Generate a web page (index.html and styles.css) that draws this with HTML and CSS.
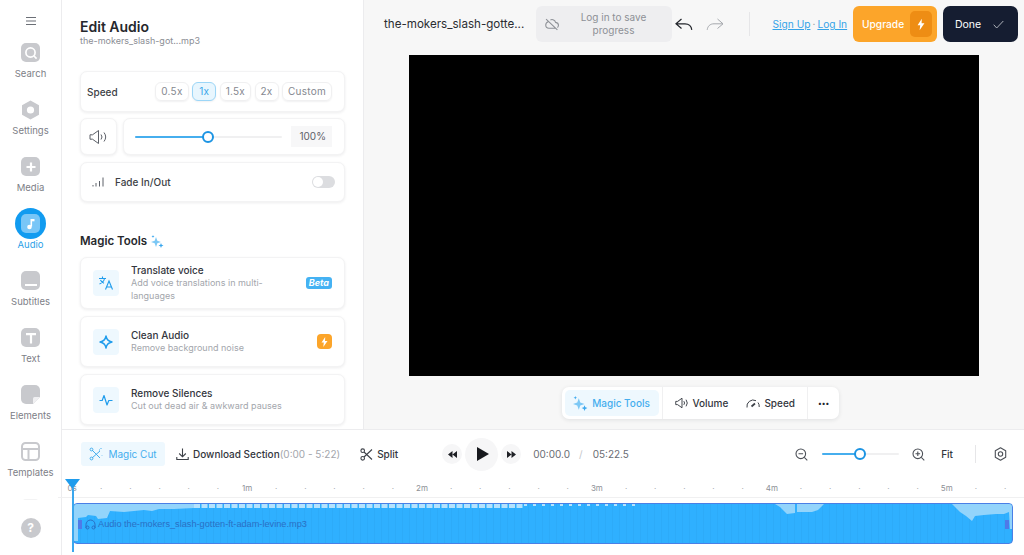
FILE: index.html
```html
<!DOCTYPE html>
<html lang="en">
<head>
<meta charset="utf-8">
<title>Edit Audio</title>
<link rel="stylesheet" href="styles.css">
</head>
<body>
<div class="app">
  <nav class="sidebar">
    <button class="menu" aria-label="Menu">
      <svg width="12" height="10" viewBox="0 0 12 10"><path d="M1 1.500h10M1 5h10M1 8.500h10" stroke="#6b6f76" stroke-width="1.100" fill="none"/></svg>
    </button>
    <div class="nav-list">
      <div class="nav-item"><span class="nav-icon"><svg width="18" height="18" viewBox="0 0 18 18"><circle cx="8.500" cy="8.500" r="4.600" fill="none" stroke="#fff" stroke-width="1.700"/><path d="M12 12l2.600 2.600" stroke="#fff" stroke-width="1.700"/></svg></span><span>Search</span></div>
      <div class="nav-item"><span class="nav-icon plain"><svg width="19" height="20" viewBox="0 0 19 20"><path d="M9.500 0.500l8.500 4.800v9.400l-8.500 4.800L1 14.700V5.300z" fill="#c8c9cd"/><circle cx="9.500" cy="10" r="3.600" fill="#fff"/></svg></span><span>Settings</span></div>
      <div class="nav-item"><span class="nav-icon"><svg width="14" height="14" viewBox="0 0 14 14"><path d="M7 2.500v9M2.500 7h9" stroke="#fff" stroke-width="2.200"/></svg></span><span>Media</span></div>
      <div class="nav-item active"><span class="nav-disc"><span class="nav-icon"><svg width="14" height="14" viewBox="0 0 14 14"><path d="M7.300 2v7.500" stroke="#fff" stroke-width="1.600"/><path d="M7.300 2h3.200v2.300H7.300" fill="#fff"/><circle cx="5.500" cy="10" r="2.300" fill="#fff"/></svg></span></span><span>Audio</span></div>
      <div class="nav-item"><span class="nav-icon"><svg width="12" height="4" viewBox="0 0 12 4" class="low"><path d="M0 2h12" stroke="#fff" stroke-width="2"/></svg></span><span>Subtitles</span></div>
      <div class="nav-item"><span class="nav-icon"><svg width="12" height="12" viewBox="0 0 12 12"><path d="M1 2.200h10M6 2.200V11.500" stroke="#fff" stroke-width="2.200"/></svg></span><span>Text</span></div>
      <div class="nav-item"><span class="nav-icon"><svg width="18" height="18" viewBox="0 0 18 18"><path d="M18 11l-7 7h7z" fill="#fff"/><path d="M11 18v-5.500a1.500 1.500 0 0 1 1.500-1.500H18" fill="#f0f0f2"/></svg></span><span>Elements</span></div>
      <div class="nav-item"><span class="nav-icon outline"><svg width="19" height="19" viewBox="0 0 19 19" fill="none" stroke="#c8c9cd" stroke-width="2"><rect x="1" y="1" width="17" height="17" rx="3.500"/><path d="M1 7h17M7.500 7v11"/></svg></span><span>Templates</span></div>
      <div class="nav-item"><span class="nav-icon"></span></div>
    </div>
    <div class="help"><span>?</span></div>
  </nav>

  <div class="workspace">
    <div class="upper">
      <aside class="panel">
        <h1>Edit Audio</h1>
        <p class="file">the-mokers_slash-got...mp3</p>

        <div class="card speed">
          <span class="speed-label">Speed</span>
          <div class="chips">
            <span class="chip">0.5x</span><span class="chip on">1x</span><span class="chip">1.5x</span><span class="chip">2x</span><span class="chip">Custom</span>
          </div>
        </div>

        <div class="volume">
          <div class="card vol-icon">
            <svg width="19" height="16" viewBox="0 0 19 16" fill="none" stroke="#5c6068" stroke-width="1"><path d="M1 5.800v4.400h2.500L9.500 14.500V1.500L3.500 5.800z" stroke-linejoin="round"/><path d="M12 5.500a4 4 0 0 1 0 5M15 3.500a7.500 7.500 0 0 1 0 9"/></svg>
          </div>
          <div class="card vol-slider">
            <div class="slider vol"><span class="fill"></span><span class="knob"></span></div>
            <span class="pct">100%</span>
          </div>
        </div>

        <div class="card fade">
          <svg width="12" height="10" viewBox="0 0 12 10" stroke="#5c6068" fill="none"><path d="M1 8v1.500M4 6v3.500M7.500 4v5.500M11 .5v9"/></svg>
          <span class="fade-label">Fade In/Out</span>
          <span class="toggle"><span></span></span>
        </div>

        <h2>Magic Tools
          <svg width="13" height="13" viewBox="0 0 13 13"><path d="M5 2l1.300 3.700L10 7 6.300 8.300 5 12 3.700 8.300 0 7l3.700-1.300z" fill="#7cc8f5"/><path d="M10 8l.7 1.800 1.800.7-1.800.7L10 13l-.7-1.800-1.800-.7 1.800-.7z" fill="#3aa7ee"/><path d="M2 0l.4 1.100 1.100.4-1.100.4L2 3l-.4-1.100L.5 1.500l1.100-.4z" fill="#3aa7ee"/></svg>
        </h2>

        <div class="card tool tall">
          <span class="tool-icon"><svg width="16" height="16" viewBox="0 0 16 16" fill="none" stroke="#1f9cec" stroke-width="1.100"><path d="M1 3.500h7M4.500 1.500v2M6.500 3.500C6 6 4 8 1.500 9M2.500 5c.6 1.500 2 2.600 3.500 3.200"/><path d="M7.500 14.500l3.500-8.500 3.500 8.500M8.700 12h4.600"/></svg></span>
          <div class="tool-text"><b>Translate voice</b><small>Add voice translations in multi-languages</small></div>
          <span class="beta">Beta</span>
        </div>
        <div class="card tool">
          <span class="tool-icon"><svg width="14" height="14" viewBox="0 0 14 14" fill="none" stroke="#1f9cec" stroke-width="1.400"><path d="M7 1c.6 3.300 2.400 5.400 6 6-3.600.6-5.400 2.700-6 6-.6-3.300-2.400-5.400-6-6 3.600-.6 5.400-2.700 6-6z" stroke-linejoin="round"/></svg></span>
          <div class="tool-text"><b>Clean Audio</b><small>Remove background noise</small></div>
          <span class="bolt"><svg width="7" height="10" viewBox="0 0 7 10"><path d="M4.200 0L.5 5.600h2.300L2.300 10 6.500 4H4z" fill="#fff"/></svg></span>
        </div>
        <div class="card tool">
          <span class="tool-icon"><svg width="14" height="12" viewBox="0 0 14 12" fill="none" stroke="#1f9cec" stroke-width="1.200"><path d="M.5 6.500h2.700L5 1.500l3 9.500 1.800-4.500h3.700" stroke-linejoin="round"/></svg></span>
          <div class="tool-text"><b>Remove Silences</b><small>Cut out dead air &amp; awkward pauses</small></div>
        </div>
      </aside>

      <main class="stage">
        <header class="topbar">
          <span class="project">the-mokers_slash-gotte...</span>
          <div class="save">
            <svg width="14" height="13" viewBox="0 0 13 12" fill="none" stroke="#8d9096"><path d="M1 1l10.500 10M3 3.500C1.500 4 .7 5.200.7 6.500c0 1.800 1.400 3 3 3h6M5 1.800C7 .8 9.300 2 9.800 4c1.500.2 2.700 1.300 2.700 2.800 0 .8-.4 1.500-.9 2"/></svg>
            <span>Log in to save progress</span>
          </div>
          <button class="hist" aria-label="Undo"><svg width="18" height="13" viewBox="0 0 18 13" fill="none" stroke="#22252b" stroke-width="1.200"><path d="M6.500 1L1 5.800l5.500 4.700M1 5.800h9c4 0 6.300 2.400 6.800 6"/></svg></button>
          <button class="hist" aria-label="Redo"><svg width="18" height="13" viewBox="0 0 18 13" fill="none" stroke="#a5a8ad" stroke-width="1"><path d="M11.500 1L17 5.800l-5.500 4.700M17 5.800H8C4 5.800 1.700 8.200 1.200 11.800"/></svg></button>
          <span class="vline"></span>
          <div class="auth"><a>Sign Up</a><i>·</i><a>Log In</a></div>
          <button class="upgrade">Upgrade<span><svg width="8" height="13" viewBox="0 0 7 10"><path d="M4.200 0L.5 5.600h2.300L2.300 10 6.500 4H4z" fill="#fff"/></svg></span></button>
          <button class="done">Done<svg width="11" height="9" viewBox="0 0 11 9" fill="none" stroke="#aeb2ba"><path d="M.7 4.700l3 3.300L10.300 1"/></svg></button>
        </header>
        <div class="canvas"></div>
        <div class="floatbar">
          <span class="fb-magic">
            <svg width="15" height="15" viewBox="0 0 13 13"><path d="M5 2l1.300 3.700L10 7 6.300 8.300 5 12 3.700 8.300 0 7l3.700-1.300z" fill="#7cc8f5"/><path d="M10 8l.7 1.800 1.800.7-1.800.7L10 13l-.7-1.800-1.800-.7 1.800-.7z" fill="#3aa7ee"/><path d="M2 0l.4 1.100 1.100.4-1.100.4L2 3l-.4-1.100L.5 1.500l1.100-.4z" fill="#3aa7ee"/></svg>
            Magic Tools</span>
          <span class="fb-sep"></span>
          <span class="fb-item"><svg width="14" height="12" viewBox="0 0 19 16" fill="none" stroke="#3d4148" stroke-width="1.300"><path d="M1 5.800v4.400h2.500L9.500 14.500V1.500L3.500 5.800z" stroke-linejoin="round"/><path d="M12 5.500a4 4 0 0 1 0 5M15 3.500a7.500 7.500 0 0 1 0 9"/></svg>Volume</span>
          <span class="fb-item"><svg width="14" height="9" viewBox="0 0 14 9" fill="none" stroke="#3d4148"><path d="M1 8.500a6.300 6.300 0 0 1 9-6.800M12 3.500a6.300 6.300 0 0 1 1.200 4.500"/><path d="M5.500 7.500L9 4.500" stroke-width="1.800"/></svg>Speed</span>
          <span class="fb-sep right"></span>
          <span class="dots">•••</span>
        </div>
      </main>
    </div>

    <section class="timeline">
      <div class="tl-bar">
        <span class="magic-cut"><svg width="14" height="14" viewBox="0 0 14 14" fill="none" stroke="#45aeee"><path d="M3 3l8 8M11 4L3 11"/><circle cx="2.500" cy="2.500" r="1.400"/><circle cx="2.500" cy="11.500" r="1.400"/><path d="M12 1v1M10 3h1M13 8v.5"/></svg>Magic Cut</span>
        <span class="tl-action download"><svg width="13" height="13" viewBox="0 0 13 13" fill="none" stroke="#3d4148" stroke-width="1.100"><path d="M6.500 .5v8M3.200 5.500l3.300 3.300 3.300-3.300M.8 9v2.500h11.400V9"/></svg><b>Download Section</b><em>(0:00 - 5:22)</em></span>
        <span class="tl-action split"><svg width="13" height="13" viewBox="0 0 13 13" fill="none" stroke="#3d4148" stroke-width="1.100"><circle cx="2.700" cy="2.700" r="1.800"/><circle cx="2.700" cy="10.300" r="1.800"/><path d="M4 4l8 7.500M4 9l8-7.500"/></svg><b>Split</b></span>
        <div class="transport">
          <span class="round"><svg width="9" height="7" viewBox="0 0 9 7"><path d="M4.500 0v7L0 3.500zM9 0v7L4.500 3.500z" fill="#1f2126"/></svg></span>
          <span class="round play"><svg width="12" height="14" viewBox="0 0 12 14"><path d="M0 0l12 7-12 7z" fill="#17191d"/></svg></span>
          <span class="round"><svg width="9" height="7" viewBox="0 0 9 7"><path d="M0 0v7l4.500-3.500zM4.500 0v7L9 3.500z" fill="#1f2126"/></svg></span>
        </div>
        <span class="time">00:00.0</span><span class="slash">/</span><span class="time">05:22.5</span>
        <div class="zoom">
          <svg width="13" height="13" viewBox="0 0 13 13" fill="none" stroke="#4c5057" stroke-width="1.100"><circle cx="5.800" cy="5.800" r="4.800"/><path d="M9.300 9.300l3 3M3.500 5.800h4.600"/></svg>
          <div class="slider zoomer"><span class="fill"></span><span class="knob"></span></div>
          <svg width="13" height="13" viewBox="0 0 13 13" fill="none" stroke="#4c5057" stroke-width="1.100"><circle cx="5.800" cy="5.800" r="4.800"/><path d="M9.300 9.300l3 3M3.500 5.800h4.600M5.800 3.500v4.600"/></svg>
          <b class="fit">Fit</b>
          <span class="vline small"></span>
          <svg width="13" height="14" viewBox="0 0 13 14" fill="none" stroke="#4c5057" stroke-width="1.100"><path d="M6.500 .8l5.200 3v6.400l-5.200 3-5.200-3V3.800z" stroke-linejoin="round"/><circle cx="6.500" cy="7" r="2.200"/></svg>
        </div>
      </div>

      <div class="ruler">
        <span class="lab">0s</span><span>·</span><span>·</span><span>·</span><span>·</span><span>·</span>
        <span class="lab">1m</span><span>·</span><span>·</span><span>·</span><span>·</span><span>·</span>
        <span class="lab">2m</span><span>·</span><span>·</span><span>·</span><span>·</span><span>·</span>
        <span class="lab">3m</span><span>·</span><span>·</span><span>·</span><span>·</span><span>·</span>
        <span class="lab">4m</span><span>·</span><span>·</span><span>·</span><span>·</span><span>·</span>
        <span class="lab">5m</span><span>·</span><span>·</span>
      </div>

      <div class="track">
        <svg class="wave" viewBox="0 0 938 39" preserveAspectRatio="none">
          <path d="M0 0V37H4V14L12 13L14 11L22 12L24 15L33 14L36 7L50 8L70 6L78 7L85 5L100 5L120 4V0Z" fill="#93d4fb"/>
          <path d="M120 2H450" stroke="#b5e2fd" stroke-width="4" stroke-dasharray="6 1.500" fill="none"/>
          <path d="M450 1H565" stroke="#b5e2fd" stroke-width="2" stroke-dasharray="3 6" fill="none"/>
          <path d="M701 0L706 3L713 10L721 9V0H723V8L738 8L744 6L750 0Z" fill="#93d4fb"/>
          <path d="M878 0L882 4L886 8L892 12L898 17L901 12L910 11L922 10L930 10L935 8L936 25L938 25V0Z" fill="#93d4fb"/>
        </svg>
        <span class="grip left"></span>
        <span class="grip right"></span>
        <span class="track-label"><svg width="11" height="11" viewBox="0 0 11 11" fill="none" stroke="#2a6fc4"><path d="M1 9V5.500a4.500 4.500 0 0 1 9 0V9"/><circle cx="2.500" cy="8.500" r="1.500"/><circle cx="8.500" cy="8.500" r="1.500"/></svg>Audio the-mokers_slash-gotten-ft-adam-levine.mp3</span>
      </div>

      <div class="playhead"><svg width="15" height="10" viewBox="0 0 15 10"><path d="M0 0h15L7.500 10z" fill="#1f9cec"/></svg><span></span></div>
    </section>
  </div>
</div>
</body>
</html>
```

FILE: styles.css
```css
* { box-sizing: border-box; }
html, body { margin: 0; height: 100%; }
body { font-family: Inter, "Liberation Sans", sans-serif; color: #22252b; background: #fff; overflow: hidden; }
h1, h2, p { margin: 0; }
button { border: 0; background: none; padding: 0; font: inherit; }

.app { display: flex; width: 1024px; height: 555px; overflow: hidden; }

/* Sidebar */
.sidebar { position: relative; width: 62px; flex: none; border-right: 1px solid #ececee; display: flex; flex-direction: column; align-items: center; background: #fff; overflow: hidden; }
.menu { height: 12px; margin-top: 15px; display: flex; align-items: center; flex: none; }
.nav-list { display: flex; flex-direction: column; align-items: center; margin-top: 16px; }
.nav-item { height: 57px; width: 61px; flex: none; display: flex; flex-direction: column; align-items: center; font-size: 9.500px; line-height: 12px; color: #7d8087; gap: 6px; }
.nav-icon { width: 19px; height: 19px; border-radius: 5px; background: #c8c9cd; display: flex; align-items: center; justify-content: center; flex: none; }
.nav-icon.plain, .nav-icon.outline { background: none; }
.nav-icon .low { margin-top: 8px; }
.nav-item.active { color: #2c9fe8; }
.nav-disc { width: 31px; height: 31px; margin: -6px 0 -6px; border-radius: 50%; background: #119bf0; display: flex; align-items: center; justify-content: center; flex: none; }
.nav-disc .nav-icon { background: #79c6f7; }
.help { position: absolute; left: 0; right: 0; bottom: 0; height: 55px; background: #fff; box-shadow: 0 -6px 10px rgba(255,255,255,.9); display: flex; align-items: center; justify-content: center; }
.help span { width: 20px; height: 20px; border-radius: 50%; background: #c8c9cd; color: #fff; font-size: 12px; font-weight: 700; display: flex; align-items: center; justify-content: center; }

/* Workspace */
.workspace { position: relative; flex: 1; display: flex; flex-direction: column; min-width: 0; }
.upper { height: 430px; flex: none; display: flex; border-bottom: 1px solid #ececee; }

/* Panel */
.panel { width: 302px; flex: none; border-right: 1px solid #ececee; padding: 18px 18px 0; overflow: hidden; background: #fff; }
.panel h1 { font-size: 14px; line-height: 17px; font-weight: 600; color: #26282d; }
.file { font-size: 9px; line-height: 12px; color: #8b8e95; }
.card { background: #fff; border-radius: 7px; border: 1px solid #f3f3f4; box-shadow: 0 1px 3px rgba(20,25,40,.08); }
.speed { height: 41px; margin-top: 24px; display: flex; align-items: center; justify-content: space-between; padding: 0 12px 0 6px; }
.speed-label { font-size: 10px; font-weight: 500; color: #3c3f46; }
.chips { display: flex; gap: 3.500px; }
.chip { height: 19px; min-width: 24px; padding: 0 5px; text-align: center; border-radius: 6px; border: 1px solid #f0f0f1; box-shadow: 0 1px 2px rgba(20,25,40,.06); font-size: 10px; letter-spacing: .25px; line-height: 17px; color: #85888f; }
.chip.on { background: #e8f6fe; border-color: #9cd6f7; color: #3aa6ea; }
.volume { display: flex; gap: 6px; margin-top: 6px; }
.vol-icon { width: 37px; height: 37px; flex: none; display: flex; align-items: center; justify-content: center; }
.vol-slider { flex: 1; height: 37px; display: flex; align-items: center; justify-content: space-between; padding: 0 12px 0 11px; }
.slider { position: relative; height: 2px; background: #f0f0f1; border-radius: 1px; }
.slider .fill { position: absolute; left: 0; top: 0; bottom: 0; background: #46aeee; border-radius: 1px; }
.slider .knob { position: absolute; top: -5px; width: 12px; height: 12px; border-radius: 50%; background: #fff; border: 2.500px solid #1c94e3; }
.slider.vol { width: 147px; }
.vol .fill { width: 73px; }
.vol .knob { left: 67px; }
.pct { width: 41px; height: 21px; background: #f7f7f8; font-size: 10px; line-height: 21px; text-align: right; padding-right: 6px; color: #5c6068; }
.fade { height: 40px; margin-top: 7px; display: flex; align-items: center; padding: 0 9px 0 11px; }
.fade-label { font-size: 10px; font-weight: 500; color: #3c3f46; margin-left: 11px; }
.toggle { margin-left: auto; width: 23px; height: 12px; border-radius: 6px; background: #dcdde0; padding: 1px; }
.toggle span { display: block; width: 10px; height: 10px; border-radius: 50%; background: #fff; }
.panel h2 { font-size: 11.500px; line-height: 16px; font-weight: 600; color: #26282d; margin-top: 31px; display: flex; align-items: center; gap: 4px; }
.tool { height: 51px; margin-top: 7px; display: flex; align-items: center; padding: 0 12px; }
.tool.tall { height: 52px; margin-top: 8px; }
.tool-icon { width: 26px; height: 26px; background: #eef8fe; border-radius: 4px; flex: none; display: flex; align-items: center; justify-content: center; }
.tool-text { margin-left: 12px; flex: 1; display: flex; flex-direction: column; min-width: 0; }
.tool-text b { font-size: 10px; line-height: 13px; font-weight: 500; color: #33363d; }
.tool-text small { font-size: 9px; line-height: 12.500px; color: #a3a6ac; max-width: 155px; }
.beta { background: #45b2f3; color: #fff; border-radius: 3px; font-size: 9px; line-height: 12px; padding: 0 3px; font-weight: 700; font-style: italic; }
.bolt { width: 15px; height: 15px; border-radius: 4px; background: #fca52a; display: flex; align-items: center; justify-content: center; }

/* Stage */
.stage { flex: 1; min-width: 0; background: #f7f7f7; display: flex; flex-direction: column; align-items: center; }
.topbar { width: 100%; height: 55px; flex: none; display: flex; align-items: center; padding: 0 6px 7px 20px; }
.project { font-size: 11.600px; color: #2a2c31; width: 152px; flex: none; white-space: nowrap; }
.save { width: 136px; height: 36px; flex: none; margin-right: -3.500px; background: #eeeef0; border-radius: 6px; display: flex; align-items: center; padding: 0 9px; font-size: 10px; line-height: 13px; color: #8d9096; text-align: center; }
.save span { margin-left: 5px; flex: 1; padding: 0 8px; }
.hist { width: 31px; display: flex; justify-content: center; flex: none; }
.vline { width: 1px; height: 24px; background: #e6e6e8; margin-left: 18px; flex: none; }
.auth { margin-left: 23px; font-size: 10.200px; color: #8d9096; display: flex; gap: 2px; white-space: nowrap; }
.auth a { color: #35a3e8; text-decoration: underline; }
.auth i { font-style: normal; }
.upgrade { margin-left: auto; width: 84px; height: 36px; flex: none; background: #fca52a; border-radius: 6px; color: #fff; font-size: 10.200px; font-weight: 500; display: flex; align-items: center; justify-content: space-between; padding: 0 5px 0 9px; }
.upgrade span { width: 22px; height: 26px; border-radius: 5px; background: #ee8d14; display: flex; align-items: center; justify-content: center; }
.done { margin-left: 6px; width: 75px; height: 36px; flex: none; background: #151d31; border-radius: 7px; color: #fff; font-size: 10.500px; font-weight: 400; display: flex; align-items: center; justify-content: space-between; padding: 0 14px 0 12px; }
.canvas { width: 570px; height: 321px; flex: none; background: #000; }
.floatbar { margin: 11px 0 0 12px; width: 277px; height: 32px; flex: none; background: #fff; border-radius: 7px; box-shadow: 0 1px 4px rgba(20,25,40,.1); display: flex; align-items: center; padding: 0 3px; font-size: 10px; font-weight: 500; color: #33363d; }
.fb-magic { height: 26px; width: 94px; flex: none; margin-right: 3px; background: #eef8fe; border-radius: 5px; display: flex; align-items: center; justify-content: center; gap: 4px; color: #45aeee; }
.fb-sep { width: 1px; align-self: stretch; background: #f0f0f1; flex: none; }
.fb-sep.right { margin-left: 12px; }
.fb-item { display: flex; align-items: center; gap: 4px; margin-left: 12px; }
.fb-item + .fb-item { margin-left: 18px; }
.dots { font-size: 7px; margin-left: 10px; color: #22252b; }

/* Timeline */
.timeline { position: relative; flex: 1; }
.tl-bar { height: 48px; display: flex; align-items: center; padding-left: 19px; font-size: 10px; }
.magic-cut { width: 84px; height: 24px; flex: none; background: #eef8fe; border-radius: 3px; color: #45aeee; display: flex; align-items: center; justify-content: center; gap: 5px; }
.tl-action { display: flex; align-items: center; gap: 4px; white-space: nowrap; }
.tl-action b { font-weight: 500; color: #33363d; }
.tl-action em { font-style: normal; color: #a3a6ac; margin-left: -4px; }
.download { margin-left: 11px; }
.split { margin-left: 20px; gap: 4px; }
.transport { display: flex; align-items: center; margin-left: 44px; gap: 3px; }
.round { width: 20px; height: 20px; border-radius: 50%; background: #f6f6f7; display: flex; align-items: center; justify-content: center; }
.round.play { width: 33px; height: 33px; padding-left: 2px; }
.time { color: #696c73; font-size: 10px; margin-left: 12px; }
.slash { color: #c4c6ca; margin-left: 9px; font-size: 10px; margin-right: -2px; }
.zoom { margin-left: auto; margin-right: 17px; display: flex; align-items: center; flex: none; }
.slider.zoomer { width: 77px; margin: 0 13px 0 14px; }
.zoomer .fill { width: 38px; }
.zoomer .knob { left: 32px; }
.fit { font-weight: 500; margin-left: 16px; color: #33363d; }
.vline.small { height: 18px; margin-left: 22px; margin-right: 18px; }

.ruler { height: 20px; display: flex; margin-left: -4.500px; border-bottom: 1px solid #f0f0f1; color: #a0a3a8; font-size: 8px; line-height: 20px; }
.ruler span { width: 29.170px; flex: none; text-align: center; }
.ruler .lab { color: #8d9096; }
.track { position: relative; height: 41px; margin: 5px 11px 0 11px; background: repeating-linear-gradient(90deg, #2fb0ff 0 6px, #2dabf9 6px 7px); border: 1px solid #4a7fe6; border-radius: 4px; overflow: hidden; }
.wave { position: absolute; inset: 0; width: 100%; height: 100%; }
.grip { position: absolute; top: 16px; width: 4px; height: 9px; background: #4f7ae8; }
.grip.left { left: 4px; }
.grip.right { right: 3px; }
.track-label { position: absolute; left: 11px; top: 14px; display: flex; align-items: center; gap: 2px; font-family: "Liberation Sans", Arial, sans-serif; font-size: 9.200px; line-height: 13px; color: #2a6fc4; white-space: nowrap; }
.playhead { position: absolute; left: 3px; top: 49px; width: 15px; display: flex; flex-direction: column; align-items: center; }
.playhead span { width: 2px; height: 64px; background: #3aa7ee; margin-top: -1px; }
```
